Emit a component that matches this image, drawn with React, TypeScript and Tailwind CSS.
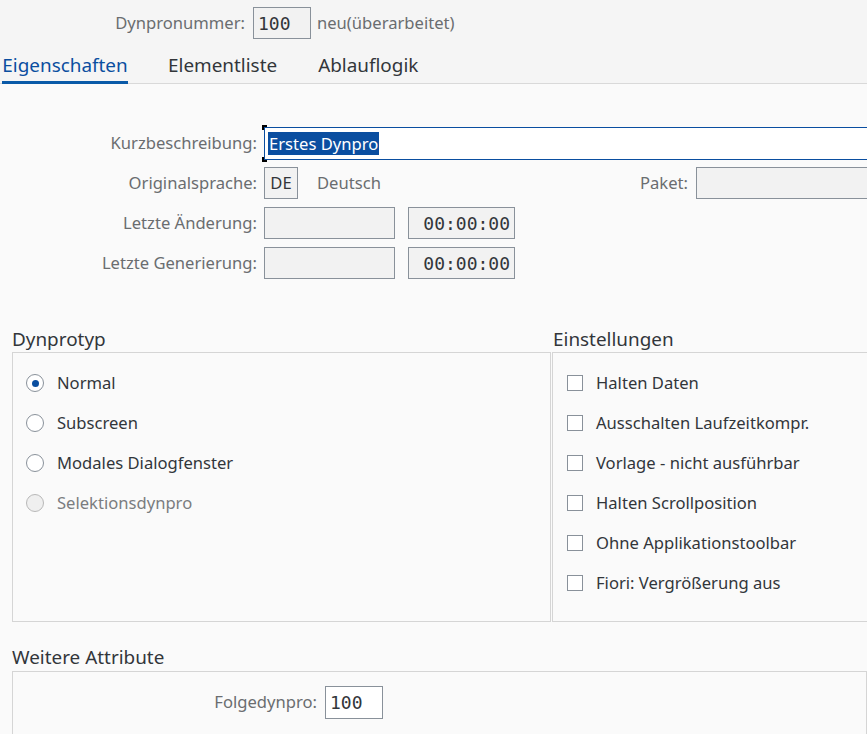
import React from 'react';

const labelCls = 'text-[16.6px] text-[#6a6d70] text-right shrink-0';
const readBox = 'h-[32px] border border-[#89919a] bg-[#f2f2f2] shrink-0';
const mono = { fontFamily: '"DejaVu Sans Mono", "Liberation Mono", monospace' };

const Radio: React.FC<{ label: string; checked?: boolean; disabled?: boolean }> = ({
  label,
  checked,
  disabled,
}) => (
  <div className="flex items-center h-[40px]">
    <span
      className={
        'w-[18px] h-[18px] rounded-full border flex items-center justify-center ' +
        (disabled ? 'border-[#b8b8b8] bg-[#efefef]' : 'border-[#89919a] bg-white')
      }
    >
      {checked && <span className="w-[7px] h-[7px] rounded-full bg-[#0a4ea0]" />}
    </span>
    <span className={'ml-[13px] text-[16.6px] ' + (disabled ? 'text-[#7a7d80]' : 'text-[#32363a]')}>
      {label}
    </span>
  </div>
);

const Check: React.FC<{ label: string }> = ({ label }) => (
  <div className="flex items-center h-[40px]">
    <span className="w-[16px] h-[16px] border border-[#89919a] bg-white" />
    <span className="ml-[13px] text-[16.6px] text-[#32363a]">{label}</span>
  </div>
);

export default function App() {
  return (
    <div
      className="w-[867px] h-[734px] overflow-hidden bg-[#fafafa] text-[#32363a]"
      style={{ fontFamily: '"Noto Sans", "Open Sans", sans-serif' }}
    >
      {/* header */}
      <div className="bg-[#f5f5f5] border-b border-[#d9d9d9]">
        <div className="flex items-center pt-[7px]">
          <span className={labelCls + ' w-[245px]'}>Dynpronummer:</span>
          <div className={readBox + ' ml-[8px] w-[58px] flex items-center px-[4px] text-[18px]'} style={mono}>
            100
          </div>
          <span className="ml-[6px] text-[16.6px] text-[#6a6d70]">neu(überarbeitet)</span>
        </div>
        <div className="flex items-end h-[45px] mb-[-1px]">
          <div className="ml-[2px] w-[126px] border-b-[3px] border-[#0a5aa8] pb-[2px] text-[18.9px] text-[#0a4ea0] text-center">
            Eigenschaften
          </div>
          <div className="ml-[40px] pb-[5px] text-[18.9px]">Elementliste</div>
          <div className="ml-[41px] pb-[5px] text-[18.9px]">Ablauflogik</div>
        </div>
      </div>

      {/* attributes */}
      <div className="pt-[43px] flex flex-col">
        <div className="flex items-center">
          <span className={labelCls + ' w-[257px]'}>Kurzbeschreibung:</span>
          <div className="relative ml-[7px] w-[640px] h-[33px] shrink-0 border border-[#0a4ea0] bg-white flex items-center px-[3px]">
            <span className="absolute left-[-3px] top-[-3px] w-[5px] h-[5px] border-l-2 border-t-2 border-black" />
            <span className="absolute left-[-3px] bottom-[-3px] w-[5px] h-[5px] border-l-2 border-b-2 border-black" />
            <span className="bg-[#0a4ea0] text-white text-[16.6px] leading-[23px] px-[1px]">Erstes Dynpro</span>
          </div>
        </div>
        <div className="flex items-center mt-[7px]">
          <span className={labelCls + ' w-[257px]'}>Originalsprache:</span>
          <div className={readBox + ' ml-[7px] w-[34px] flex items-center justify-center text-[16.6px]'}>DE</div>
          <div className="w-[390px] shrink-0 flex items-center text-[16.6px] text-[#6a6d70]">
            <span className="ml-[19px]">Deutsch</span>
            <span className="ml-auto">Paket:</span>
          </div>
          <div className={readBox + ' ml-[8px] w-[200px]'} />
        </div>
        {['Letzte Änderung:', 'Letzte Generierung:'].map((l) => (
          <div key={l} className="flex items-center mt-[8px]">
            <span className={labelCls + ' w-[257px]'}>{l}</span>
            <div className={readBox + ' ml-[7px] w-[131px]'} />
            <div
              className={readBox + ' ml-[13px] w-[107px] flex items-center justify-end pr-[4px] text-[18px] text-[#32363a]'}
              style={mono}
            >
              00:00:00
            </div>
          </div>
        ))}
      </div>

      {/* group boxes */}
      <div className="flex mt-[48px] ml-[12px]">
        <div className="w-[539px] shrink-0">
          <div className="text-[18.9px] h-[25px] leading-[25px]">Dynprotyp</div>
          <div className="h-[270px] border border-[#d5d5d5] pl-[13px] pt-[10px]">
            <Radio label="Normal" checked />
            <Radio label="Subscreen" />
            <Radio label="Modales Dialogfenster" />
            <Radio label="Selektionsdynpro" disabled />
          </div>
        </div>
        <div className="ml-[1px] w-[330px] shrink-0">
          <div className="text-[18.9px] h-[25px] leading-[25px] pl-[1px]">Einstellungen</div>
          <div className="h-[270px] border border-[#d5d5d5] pl-[14px] pt-[10px]">
            <Check label="Halten Daten" />
            <Check label="Ausschalten Laufzeitkompr." />
            <Check label="Vorlage - nicht ausführbar" />
            <Check label="Halten Scrollposition" />
            <Check label="Ohne Applikationstoolbar" />
            <Check label="Fiori: Vergrößerung aus" />
          </div>
        </div>
      </div>

      <div className="ml-[12px] mt-[23px]">
        <div className="text-[18.9px] h-[26px] leading-[25px]">Weitere Attribute</div>
        <div className="h-[80px] border border-[#d5d5d5] pt-[14px] flex items-start">
          <div className="flex items-center">
            <span className={labelCls + ' w-[304px]'}>Folgedynpro:</span>
            <div
              className="ml-[8px] w-[58px] h-[33px] border border-[#89919a] bg-white flex items-center px-[4px] text-[18px]"
              style={mono}
            >
              100
            </div>
          </div>
        </div>
      </div>
    </div>
  );
}
